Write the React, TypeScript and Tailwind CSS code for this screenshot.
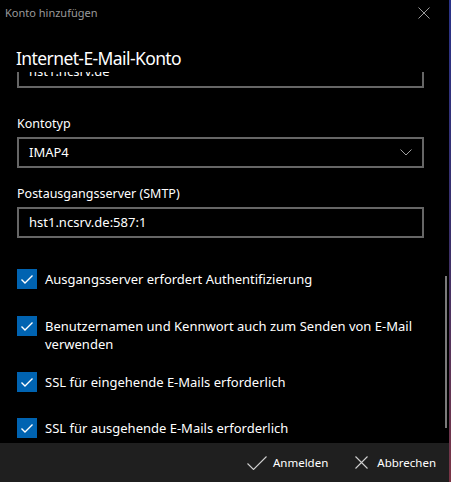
import React from "react";

const font = { fontFamily: '"Noto Sans", "Open Sans", sans-serif' };

function Check() {
  return (
    <div className="w-[20px] h-[20px] bg-[#0063b1] flex-none flex items-center justify-center">
      <svg width="20" height="20" viewBox="0 0 20 20">
        <polyline points="4.5,10.5 8,14 15.5,6.5" fill="none" stroke="#ffffff" strokeWidth="1.4" />
      </svg>
    </div>
  );
}

function Row({ children, className }: { children: React.ReactNode; className: string }) {
  return (
    <div className={"flex items-start gap-[8px] " + className}>
      <Check />
      <div className="text-[13px] leading-[18px] pt-[1px] text-white">{children}</div>
    </div>
  );
}

export default function App() {
  return (
    <div className="w-[451px] h-[482px] flex overflow-hidden" style={font}>
      <div className="w-[449px] h-full bg-black flex flex-col">
        <div className="h-[26px] flex items-center justify-between pl-[5px] pr-[19px] flex-none">
          <span className="text-[11px] text-[#9a9a9a] leading-[16px]">Konto hinzufügen</span>
          <svg width="12" height="12" viewBox="0 0 12 12">
            <path d="M0.5 0.5 L11.5 11.5 M11.5 0.5 L0.5 11.5" stroke="#9a9a9a" strokeWidth="1" />
          </svg>
        </div>
        <div className="relative z-10 h-[46px] flex-none pl-[16px] pt-[19px] bg-black">
          <div className="text-[17.5px] leading-[26px] tracking-[-0.6px] text-white">Internet-E-Mail-Konto</div>
        </div>
        <div className="relative flex-1 overflow-hidden">
          <div className="pl-[17px] pr-[25px]">
            <div className="mt-[-16px] h-[32px] border-2 border-[#666666] flex items-center px-[10px] text-[13px] text-white">
              hst1.ncsrv.de
            </div>
            <div className="mt-[26px] text-[12.5px] leading-[20px] text-white">Kontotyp</div>
            <div className="mt-[3px] h-[31px] border-2 border-[#666666] flex items-center justify-between pl-[10px] pr-[10px] text-[13px] text-white">
              <span>IMAP4</span>
              <svg width="12" height="7" viewBox="0 0 12 7">
                <polyline points="0.5,0.5 6,6 11.5,0.5" fill="none" stroke="#a0a0a0" strokeWidth="1" />
              </svg>
            </div>
            <div className="mt-[16px] text-[12.5px] leading-[20px] text-white">Postausgangsserver (SMTP)</div>
            <div className="mt-[3px] h-[31px] border-2 border-[#666666] flex items-center px-[10px] text-[13px] text-white">
              hst1.ncsrv.de:587:1
            </div>
            <Row className="mt-[31px] h-[20px]">Ausgangsserver erfordert Authentifizierung</Row>
            <Row className="mt-[27px] h-[36px]">
              Benutzernamen und Kennwort auch zum Senden von E-Mail
              <br />
              verwenden
            </Row>
            <Row className="mt-[20px] h-[20px]">SSL für eingehende E-Mails erforderlich</Row>
            <Row className="mt-[26px] h-[20px]">SSL für ausgehende E-Mails erforderlich</Row>
          </div>
          <div className="absolute left-[445px] top-[204px] w-[2px] h-[152px] bg-[#7a7a7a]" />
        </div>
        <div className="h-[39px] flex-none bg-[#1f1f1f] flex items-center justify-end pr-[13px] text-[11.5px] text-white">
          <div className="flex items-center gap-[6px]">
            <svg width="20" height="14" viewBox="0 0 20 14">
              <polyline points="0.5,7.5 6.5,13.5 19.5,0.5" fill="none" stroke="#d0d0d0" strokeWidth="1.1" />
            </svg>
            <span>Anmelden</span>
          </div>
          <div className="flex items-center gap-[9px] ml-[27px]">
            <svg width="13" height="13" viewBox="0 0 13 13">
              <path d="M0.5 0.5 L12.5 12.5 M12.5 0.5 L0.5 12.5" stroke="#d0d0d0" strokeWidth="1.1" />
            </svg>
            <span>Abbrechen</span>
          </div>
        </div>
      </div>
      <div className="w-[2px] h-full bg-gradient-to-b from-[#2a3388] via-[#3a2f6a] to-[#7a3444]" />
    </div>
  );
}
